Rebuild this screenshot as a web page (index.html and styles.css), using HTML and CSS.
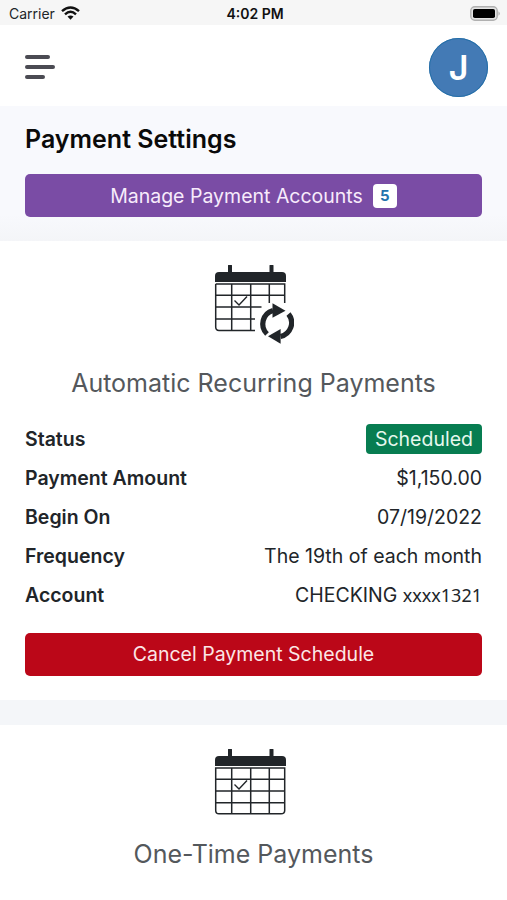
FILE: index.html
```html
<!DOCTYPE html>
<html lang="en">

<head>
    <meta charset="UTF-8">
    <meta name="viewport" content="width=device-width, initial-scale=1.0">
    <title>Payment Settings</title>
    <link rel="stylesheet" href="styles.css">
</head>

<body>
    <div class="status-bar">
        <div class="carrier">
            <span>Carrier</span>
            <svg class="wifi" width="19" height="14" viewBox="0 0 19 14" fill="none" stroke="#111" stroke-width="2.4">
                <path d="M1 5.2Q9.500-2.400 18 5.200" />
                <path d="M4 8.300Q9.500 3.200 15 8.300" />
                <path d="M9.500 13.700L6.500 10.600Q9.500 8.200 12.500 10.600Z" fill="#111" stroke="none" />
            </svg>
        </div>
        <span class="time">4:02 PM</span>
        <svg class="battery" width="31" height="15" viewBox="0 0 31 15">
            <rect x="0.800" y="0.800" width="26.400" height="13.400" rx="4" fill="#e4e4e4" stroke="#b0b0b0" stroke-width="1.400" />
            <rect x="3" y="3" width="22" height="9" rx="1.800" fill="#000" />
            <path d="M28.500 5.200Q31 7.500 28.500 9.800Z" fill="#aaa" />
        </svg>
    </div>

    <header class="navbar">
        <div class="menu">
            <span class="bar"></span>
            <span class="bar long"></span>
            <span class="bar short"></span>
        </div>
        <div class="avatar">J</div>
    </header>

    <section class="settings">
        <h1>Payment Settings</h1>
        <a class="btn purple"><span class="manage">Manage Payment Accounts</span><span class="count">5</span></a>
    </section>

    <section class="card recurring">
        <svg class="icon" width="80" height="80" viewBox="0 0 80 80" fill="none" stroke="#212529" stroke-width="1.500">
            <path d="M16 1V8M57.500 1V8" stroke-width="4" stroke-linecap="round" />
            <path d="M1 17V11Q1 7 5 7H68Q72 7 72 11V17Z" fill="#212529" stroke="none" />
            <path d="M1.700 19H70.700V38M1.700 19V62Q1.700 65.400 5 65.400H41M1.700 30.300H70.700M1.700 42H47.500M1.700 54H41M17.700 19V65.400M36.700 19V65.400M55.300 19V38" />
            <path d="M20.500 35.600L25 40L33 31.500" stroke-width="1.400" />
            <path d="M53 69A14 14 0 0 1 59 45.500" stroke-width="5.200" />
            <path d="M58.500 38.200L71.500 45.700L58.500 52.700Z" fill="#212529" stroke="none" />
            <path d="M74.500 49A14 14 0 0 1 66.500 71.500" stroke-width="5.200" />
            <path d="M66.600 64L54 71.200L66.600 78.700Z" fill="#212529" stroke="none" />
        </svg>
        <h2>Automatic Recurring Payments</h2>
        <div class="details">
            <div class="row"><b>Status</b><span class="badge">Scheduled</span></div>
            <div class="row"><b>Payment Amount</b><span class="amount">$1,150.00</span></div>
            <div class="row"><b>Begin On</b><span class="date">07/19/2022</span></div>
            <div class="row"><b>Frequency</b><span>The 19th of each month</span></div>
            <div class="row"><b>Account</b><span class="account">CHECKING <span class="mono">xxxx1321</span></span></div>
        </div>
        <a class="btn red">Cancel Payment Schedule</a>
    </section>

    <section class="card one-time">
        <svg class="icon" width="80" height="80" viewBox="0 0 80 80" fill="none" stroke="#212529" stroke-width="1.500">
            <path d="M16 1V8M57.500 1V8" stroke-width="4" stroke-linecap="round" />
            <path d="M1 17V11Q1 7 5 7H68Q72 7 72 11V17Z" fill="#212529" stroke="none" />
            <path d="M1.700 19H70.700V61.500Q70.700 64.800 67 64.800H5Q1.700 64.800 1.700 61.500ZM1.700 30.300H70.700M1.700 42H70.700M1.700 53.700H70.700M17.700 19V64.800M36.700 19V64.800M55.300 19V64.800" />
            <path d="M20.500 35.600L25 40L33 31.500" stroke-width="1.400" />
        </svg>
        <h2>One-Time Payments</h2>
    </section>
</body>

</html>
```
FILE: styles.css
```css
body {
    margin: 0;
    height: 900px;
    overflow: hidden;
    font-family: Inter, "Liberation Sans", sans-serif;
    font-size: 19.5px;
    color: #212529;
    background-color: #f4f6f9;
}

.status-bar {
    display: grid;
    grid-template-columns: 1fr auto 1fr;
    align-items: center;
    height: 25px;
    padding: 1px 6px 0 9px;
    box-sizing: border-box;
    background-color: #f6f6f6;
    font-size: 14px;
}

.carrier {
    display: flex;
    align-items: center;
    gap: 6px;
}

.time {
    font-weight: 600;
    color: #111;
}

.battery {
    justify-self: end;
}

.navbar {
    display: flex;
    align-items: center;
    justify-content: space-between;
    height: 81px;
    padding: 3px 19px 0 25px;
    box-sizing: border-box;
    background-color: #fff;
}

.menu {
    display: flex;
    flex-direction: column;
    gap: 6px;
}

.bar {
    width: 25px;
    height: 4px;
    border-radius: 2px;
    background-color: #4b4b53;
}

.bar.long {
    width: 30px;
}

.bar.short {
    width: 20px;
}

.avatar {
    width: 59px;
    height: 59px;
    line-height: 59px;
    box-sizing: border-box;
    border-radius: 50%;
    text-align: center;
    font-size: 34px;
    font-weight: 600;
    color: #fff;
    background-color: #437ab5;
    box-shadow: inset 0 0 0 1px #256fa8;
}

.settings {
    height: 135px;
    padding: 16px 25px 0;
    box-sizing: border-box;
    background: linear-gradient(#f8f9fd 80%, #f4f5f8);
}

h1 {
    margin: 0 0 18px;
    line-height: 34px;
    font-size: 25px;
    font-weight: 600;
    color: #0a0a0a;
}

.btn {
    display: flex;
    align-items: center;
    justify-content: center;
    height: 43px;
    border-radius: 5px;
    color: #f7ebfb;
}

.purple {
    background-color: #7a4ca5;
}

.red {
    background-color: #bb0718;
    color: #fbe6e6;
}

.count {
    width: 24px;
    height: 24px;
    line-height: 24px;
    margin-left: 10px;
    border-radius: 4px;
    text-align: center;
    font-size: 15px;
    font-weight: 700;
    color: #2373ad;
    background-color: #fff;
}

.card {
    padding: 24px 25px 0;
    box-sizing: border-box;
    background-color: #fff;
}

.recurring {
    height: 459px;
}

.one-time {
    height: 175px;
    margin-top: 25px;
}

.icon {
    display: block;
    margin-left: 189px;
}

h2 {
    margin: 20px 0 0;
    line-height: 36px;
    text-align: center;
    font-size: 25px;
    font-weight: 400;
    color: #54585c;
}

.one-time h2 {
    margin-top: 7px;
}

.details {
    margin: 18px 0;
}

.row {
    display: flex;
    align-items: center;
    justify-content: space-between;
    height: 39.2px;
}

.row b {
    font-weight: 600;
}

.badge {
    height: 30px;
    line-height: 30px;
    padding: 0 9px;
    border-radius: 4px;
    color: #e5f8ee;
    background-color: #077d51;
}

.mono {
    font-family: "Noto Sans", "DejaVu Sans", sans-serif;
    font-size: 18px;
}
```
